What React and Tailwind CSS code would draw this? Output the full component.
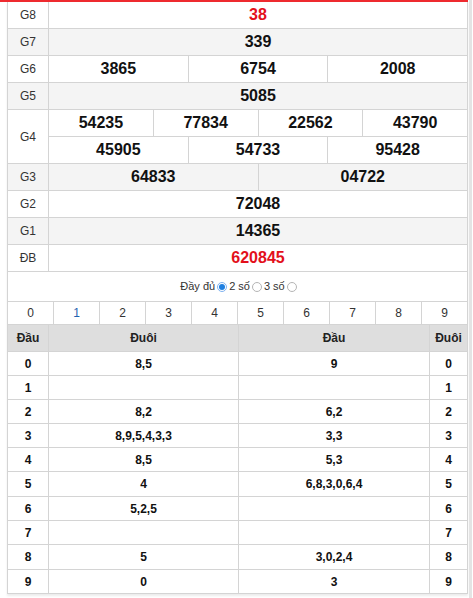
import React from 'react';

const prizes = [
  { label: 'G8', rows: [['38']], red: true },
  { label: 'G7', rows: [['339']], alt: true },
  { label: 'G6', rows: [['3865', '6754', '2008']] },
  { label: 'G5', rows: [['5085']], alt: true },
  { label: 'G4', rows: [['54235', '77834', '22562', '43790'], ['45905', '54733', '95428']] },
  { label: 'G3', rows: [['64833', '04722']], alt: true },
  { label: 'G2', rows: [['72048']] },
  { label: 'G1', rows: [['14365']], alt: true },
  { label: 'ĐB', rows: [['620845']], red: true },
];

const loto = [
  ['0', '8,5', '9', '0'],
  ['1', '', '', '1'],
  ['2', '8,2', '6,2', '2'],
  ['3', '8,9,5,4,3,3', '3,3', '3'],
  ['4', '8,5', '5,3', '4'],
  ['5', '4', '6,8,3,0,6,4', '5'],
  ['6', '5,2,5', '', '6'],
  ['7', '', '', '7'],
  ['8', '5', '3,0,2,4', '8'],
  ['9', '0', '3', '9'],
];

const Radio = ({ checked }) =>
  checked ? (
    <span className="inline-flex w-[10px] h-[10px] rounded-full border border-[#7fb2f0] bg-white items-center justify-center mx-[2px]">
      <span className="w-[6px] h-[6px] rounded-full bg-[#1e7fe0]" />
    </span>
  ) : (
    <span className="inline-block w-[10px] h-[10px] rounded-full border border-[#b5b5b5] bg-white mx-[2px]" />
  );

const PrizeRow = ({ prize }) => {
  const bg = prize.alt ? 'bg-[#f4f4f4]' : 'bg-white';
  const color = prize.red ? 'text-[#e3101b]' : 'text-[#111]';
  const height = prize.rows.length === 2 ? 'h-[54px]' : 'h-[27px]';
  return (
    <div className={`flex ${bg} ${height}`}>
      <div className="w-[41px] shrink-0 flex items-center justify-center border-r border-b border-[#d4d4d4] text-[12px] text-[#333]">
        {prize.label}
      </div>
      <div className="flex-1 flex flex-col">
        {prize.rows.map((row, i) => (
          <div key={i} className="flex h-[27px]">
            {row.map((n, j) => (
              <div
                key={j}
                className={`flex-1 flex items-center justify-center border-r border-b border-[#d4d4d4] text-[16px] font-bold ${color}`}
              >
                {n}
              </div>
            ))}
          </div>
        ))}
      </div>
    </div>
  );
};

export default function App() {
  const rowHeights = ['h-[24px]', 'h-[24px]', 'h-[24px]', 'h-[24px]', 'h-[24px]', 'h-[25px]', 'h-[24px]', 'h-[24px]', 'h-[25px]', 'h-[24px]'];
  return (
    <div className="w-[473px] h-[598px] bg-white flex overflow-hidden" style={{ fontFamily: '"Liberation Sans", Arial, sans-serif' }}>
      <div className="w-[468px] flex flex-col">
        <div className="h-[2px] bg-[#ee2a2f]" />
        <div className="ml-[7px] border-l border-[#d4d4d4] shadow-[0_2px_2px_rgba(0,0,0,0.08)]">
          {prizes.map((p) => (
            <PrizeRow key={p.label} prize={p} />
          ))}

          <div className="h-[30px] flex items-center justify-center pl-[4px] border-r border-b border-[#d4d4d4] text-[11px] text-[#333]">
            <span>Đầy đủ</span>
            <Radio checked />
            <span>2 số</span>
            <Radio />
            <span>3 số</span>
            <Radio />
          </div>

          <div className="grid grid-cols-10 h-[23px]">
            {['0', '1', '2', '3', '4', '5', '6', '7', '8', '9'].map((d) => (
              <div
                key={d}
                className={`flex items-center justify-center border-r border-b border-[#d4d4d4] text-[12px] ${d === '1' ? 'text-[#1f62b0]' : 'text-[#333]'}`}
              >
                {d}
              </div>
            ))}
          </div>

          <div className="flex h-[27px] bg-[#dedede] text-[12px] font-bold text-[#222]">
            <div className="w-[41px] flex items-center justify-center border-r border-b border-[#d4d4d4]">Đầu</div>
            <div className="w-[190px] flex items-center justify-center border-r border-b border-[#d4d4d4]">Đuôi</div>
            <div className="w-[191px] flex items-center justify-center border-r border-b border-[#d4d4d4]">Đầu</div>
            <div className="flex-1 flex items-center justify-center border-r border-b border-[#d4d4d4]">Đuôi</div>
          </div>

          {loto.map((r, i) => (
            <div key={i} className={`flex ${rowHeights[i]} text-[12px] font-bold text-[#111]`}>
              <div className="w-[41px] flex items-center justify-center border-r border-b border-[#d4d4d4]">{r[0]}</div>
              <div className="w-[190px] flex items-center justify-center border-r border-b border-[#d4d4d4]">{r[1]}</div>
              <div className="w-[191px] flex items-center justify-center border-r border-b border-[#d4d4d4]">{r[2]}</div>
              <div className="flex-1 flex items-center justify-center border-r border-b border-[#d4d4d4]">{r[3]}</div>
            </div>
          ))}
        </div>
      </div>
      <div className="w-[1px]" />
      <div className="w-[3px] bg-[#e4e4e4]" />
    </div>
  );
}
